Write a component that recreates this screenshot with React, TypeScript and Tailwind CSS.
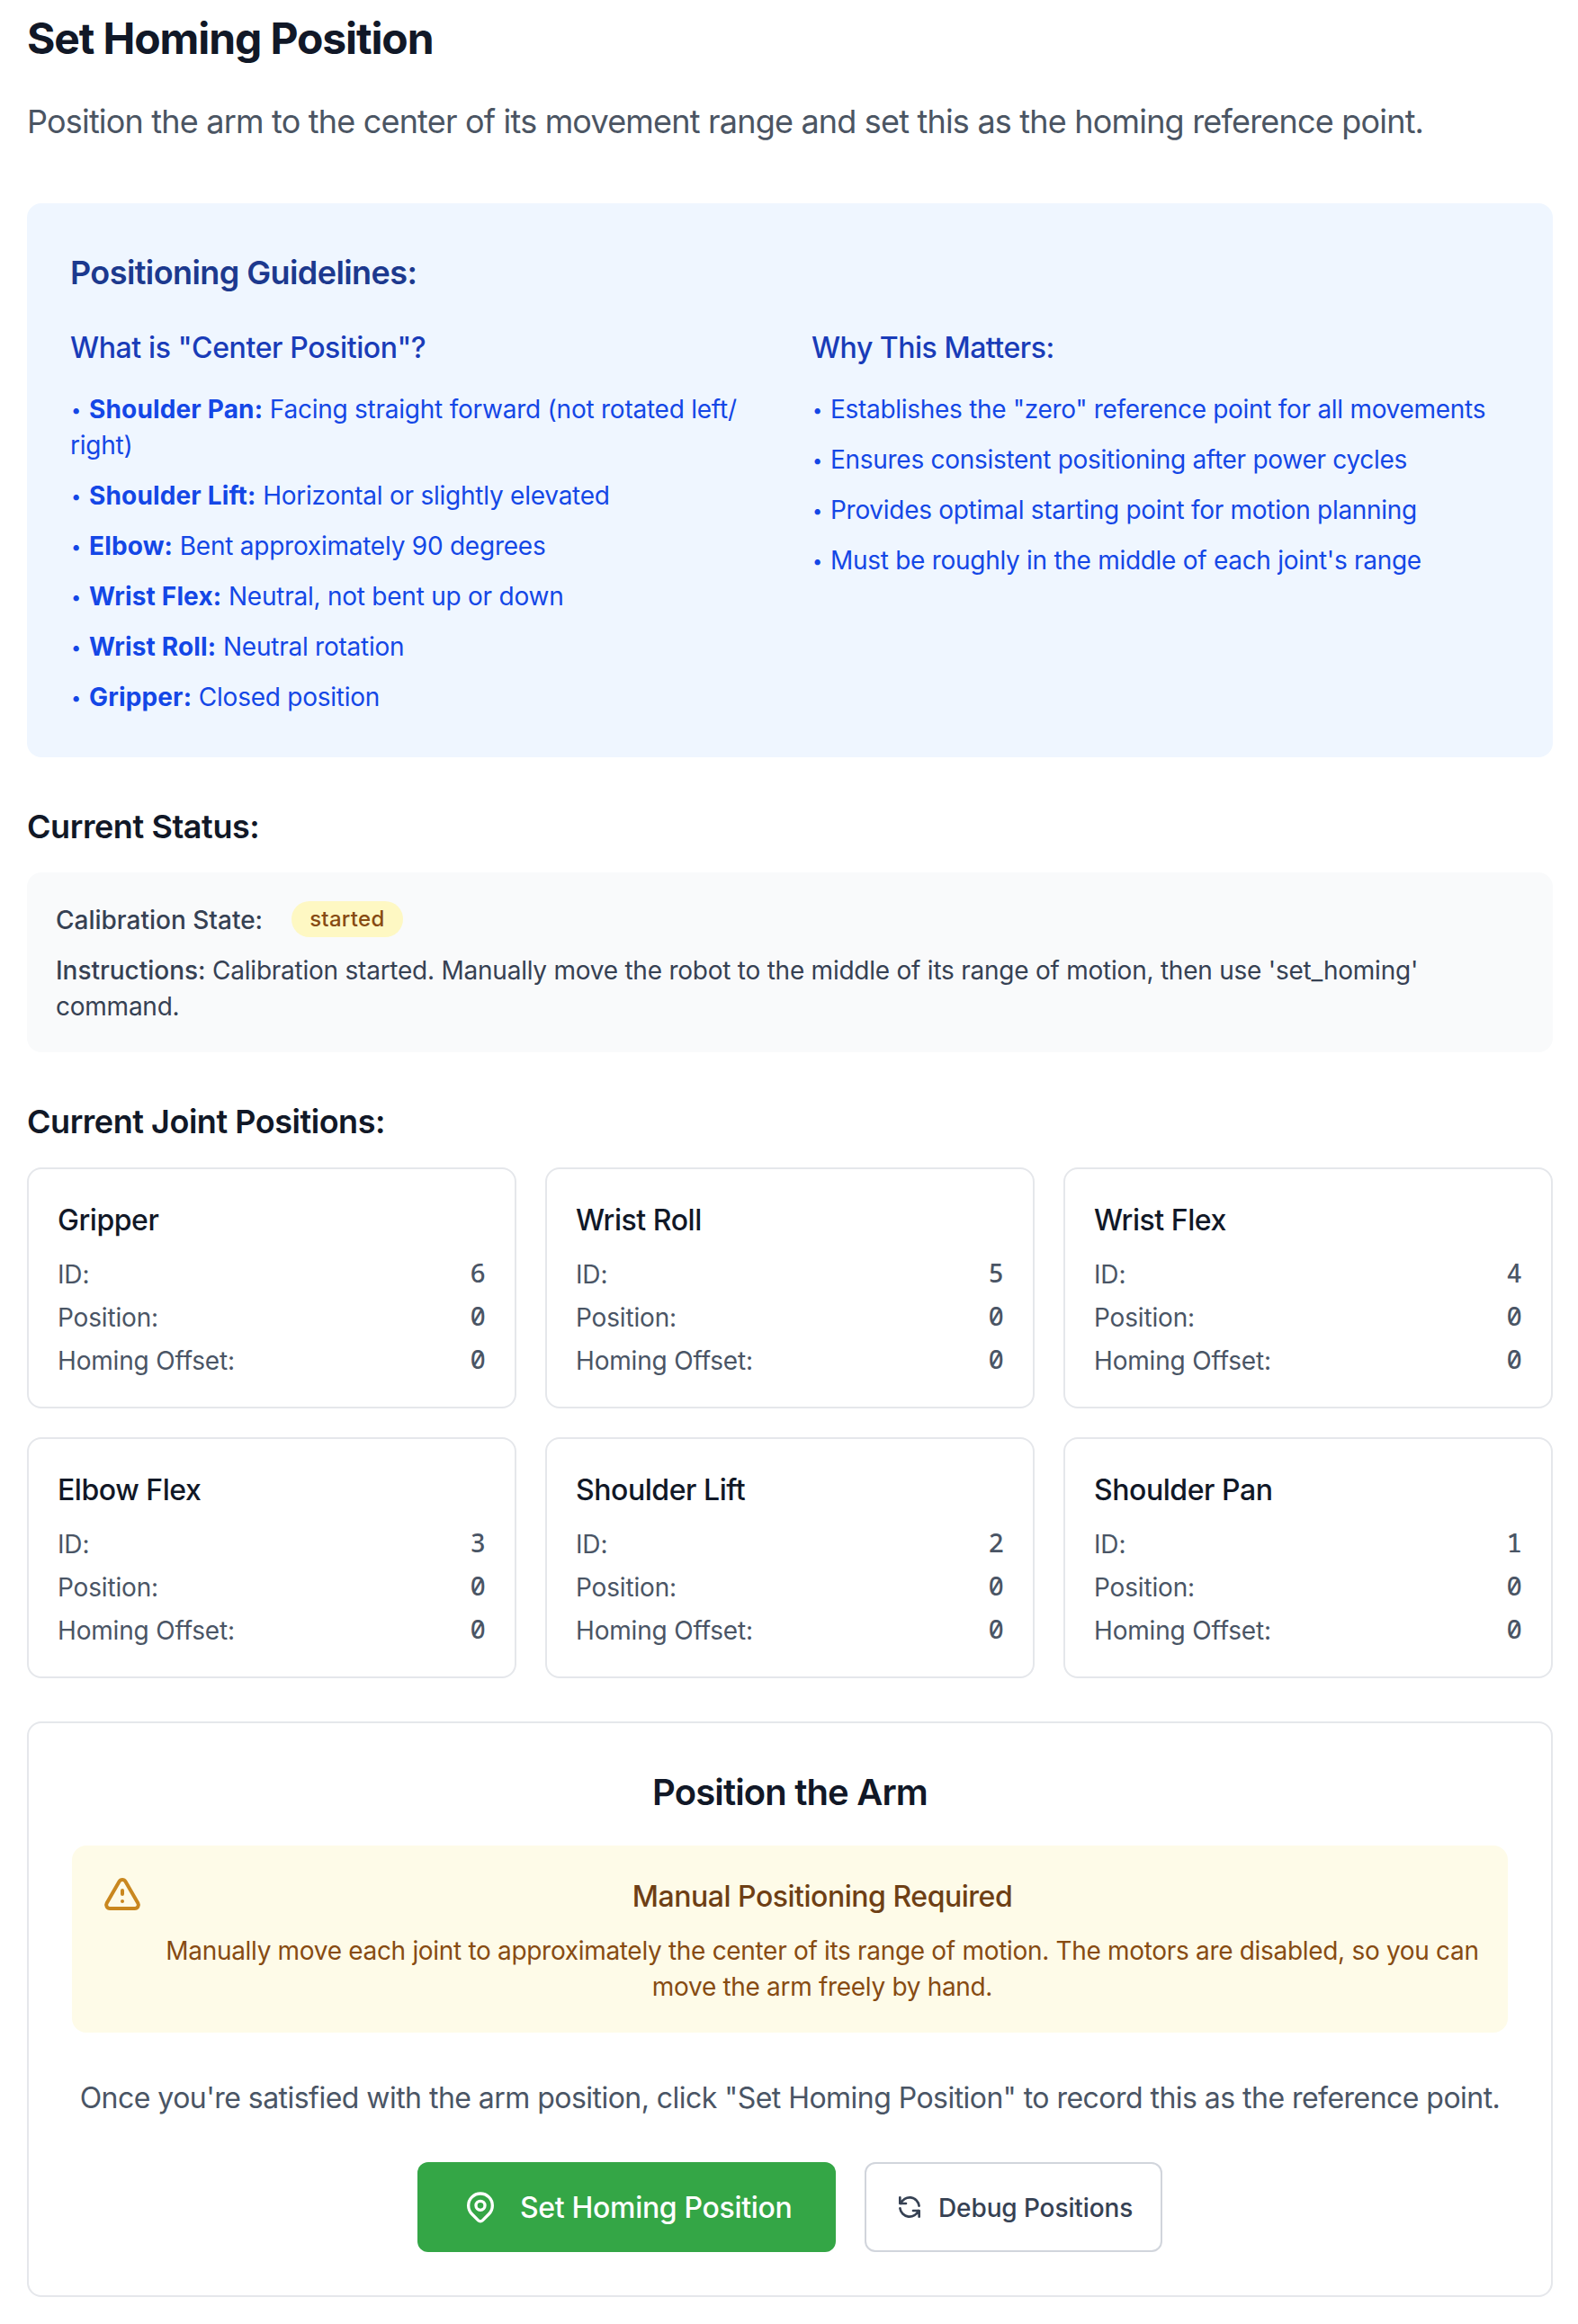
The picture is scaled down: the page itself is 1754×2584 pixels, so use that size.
import type { ReactNode } from 'react';

const poses: [string, string][] = [
  ['Shoulder Pan:', 'Facing straight forward (not rotated left/ right)'],
  ['Shoulder Lift:', 'Horizontal or slightly elevated'],
  ['Elbow:', 'Bent approximately 90 degrees'],
  ['Wrist Flex:', 'Neutral, not bent up or down'],
  ['Wrist Roll:', 'Neutral rotation'],
  ['Gripper:', 'Closed position'],
];

const reasons = [
  'Establishes the "zero" reference point for all movements',
  'Ensures consistent positioning after power cycles',
  'Provides optimal starting point for motion planning',
  "Must be roughly in the middle of each joint's range",
];

const joints = [
  { name: 'Gripper', id: 6, position: 0, offset: 0 },
  { name: 'Wrist Roll', id: 5, position: 0, offset: 0 },
  { name: 'Wrist Flex', id: 4, position: 0, offset: 0 },
  { name: 'Elbow Flex', id: 3, position: 0, offset: 0 },
  { name: 'Shoulder Lift', id: 2, position: 0, offset: 0 },
  { name: 'Shoulder Pan', id: 1, position: 0, offset: 0 },
];

function Icon({ className, children }: { className: string; children: ReactNode }) {
  return (
    <svg
      className={className}
      viewBox="0 0 24 24"
      fill="none"
      stroke="currentColor"
      strokeWidth={2}
      strokeLinecap="round"
      strokeLinejoin="round"
    >
      {children}
    </svg>
  );
}

function Bullet() {
  return <span className="inline-block w-[21px] pl-px align-[2px] text-[20px] leading-none">•</span>;
}

function Row({ label, value }: { label: string; value: number }) {
  return (
    <div className="flex h-10 items-start justify-between">
      <span className="tracking-[-0.006em]">{label}</span>
      <span className="font-['Noto_Sans_Mono',monospace] text-[29px] leading-[36px] font-medium">{value}</span>
    </div>
  );
}

export default function App() {
  return (
    <div className="min-h-[2584px] bg-white pt-[11px] pr-[28px] pl-[30px] font-['Inter',sans-serif] text-[#111827]">
      <h2 className="text-[48px] leading-[64px] font-bold tracking-[-0.0232em]">Set Homing Position</h2>
      <p className="mt-8 text-[36px] leading-[56px] tracking-[-0.0224em] whitespace-nowrap text-[#4b5563]">
        Position the arm to the center of its movement range and set this as the homing reference point.
      </p>

      <section className="mt-[63px] rounded-2xl bg-[#eff6ff] px-12 pt-[49px] pb-[47px]">
        <h3 className="text-[36px] leading-[56px] font-semibold tracking-[-0.0163em] text-[#1c398e]">
          Positioning Guidelines:
        </h3>
        <div className="mt-8 grid grid-cols-2 gap-12">
          <div>
            <h4 className="text-[32px] leading-[48px] font-medium tracking-[-0.012em] text-[#193cb8]">
              What is "Center Position"?
            </h4>
            <ul className="mt-6 space-y-4 text-[28px] leading-[40px] tracking-[-0.0085em] text-[#1447e6]">
              {poses.map(([name, text]) => (
                <li key={name}>
                  <Bullet />
                  <strong className="font-bold tracking-[0.0055em]">{name}</strong> {text.split('/ ')[0]}
                  {text.includes('/ ') && (
                    <>
                      /<br />
                      {text.split('/ ')[1]}
                    </>
                  )}
                </li>
              ))}
            </ul>
          </div>
          <div>
            <h4 className="text-[32px] leading-[48px] font-medium tracking-[-0.015em] text-[#193cb8]">
              Why This Matters:
            </h4>
            <ul className="mt-6 space-y-4 text-[28px] leading-[40px] tracking-[-0.0103em] text-[#1447e6]">
              {reasons.map((reason) => (
                <li key={reason}>
                  <Bullet />
                  {reason}
                </li>
              ))}
            </ul>
          </div>
        </div>
      </section>

      <h3 className="mt-[49px] text-[36px] leading-[56px] font-semibold tracking-[-0.0118em]">Current Status:</h3>
      <section className="mt-[23px] rounded-2xl bg-[#f9fafb] px-8 pt-8 pb-[31px] text-[28px] leading-[40px] text-[#364153]">
        <div className="flex items-center gap-8">
          <span className="pt-px font-medium -mb-px">Calibration State:</span>
          <span className="rounded-full bg-[#fef8c3] px-5 text-[24px] font-medium tracking-[0.012em] text-[#874b12]">
            started
          </span>
        </div>
        <p className="mt-[17px] tracking-[-0.0085em] whitespace-nowrap">
          <span className="font-medium tracking-[-0.001em]">Instructions:</span> Calibration started. Manually move the
          robot to the middle of its range of motion, then use 'set_homing'
          <br />
          command.
        </p>
      </section>

      <h3 className="mt-[49px] text-[36px] leading-[56px] font-semibold tracking-[-0.013em]">
        Current Joint Positions:
      </h3>
      <section className="mt-[23px] grid grid-cols-3 gap-8">
        {joints.map((joint) => (
          <article key={joint.id} className="rounded-2xl border-2 border-[#e5e7eb] px-8 pt-[33px] pb-[31px]">
            <h4 className="text-[32px] leading-[48px] font-medium tracking-[-0.014em]">{joint.name}</h4>
            <div className="mt-4 space-y-2 text-[28px] leading-[40px] text-[#4a5565]">
              <Row label="ID:" value={joint.id} />
              <Row label="Position:" value={joint.position} />
              <Row label="Homing Offset:" value={joint.offset} />
            </div>
          </article>
        ))}
      </section>

      <section className="mt-12 rounded-2xl border-2 border-[#e5e7eb] px-12 pt-[49px] pb-12 text-center">
        <h3 className="text-[40px] leading-[56px] font-semibold tracking-[-0.0213em]">Position the Arm</h3>
        <div className="mt-[31px] flex items-start gap-6 rounded-2xl bg-[#fefbe8] p-8">
          <Icon className="size-12 shrink-0 text-[#c9871f]">
            <path d="M12 9v2m0 4h.01m-6.938 4h13.856c1.54 0 2.502-1.667 1.732-3L13.732 4c-.77-1.333-2.694-1.333-3.464 0L3.34 16c-.77 1.333.192 3 1.732 3z" />
          </Icon>
          <div className="-mb-px flex-1 pt-px">
            <h4 className="text-[32px] leading-[48px] font-medium tracking-[-0.0149em] text-[#6e3f14]">
              Manual Positioning Required
            </h4>
            <p className="mt-4 text-[28px] leading-[40px] tracking-[-0.0112em] whitespace-nowrap text-[#874b12]">
              Manually move each joint to approximately the center of its range of motion. The motors are disabled, so
              you can
              <br />
              move the arm freely by hand.
            </p>
          </div>
        </div>
        <p className="mt-[49px] text-[32px] leading-[48px] tracking-[-0.0167em] whitespace-nowrap text-[#4a5565]">
          Once you're satisfied with the arm position, click "Set Homing Position" to record this as the reference
          point.
        </p>
        <div className="mt-[47px] flex justify-center gap-8">
          <button className="flex h-[100px] w-[465px] items-center gap-6 rounded-xl bg-[#34a646] pl-[50px] text-[32px] leading-[48px] font-medium tracking-[-0.0103em] whitespace-nowrap text-white">
            <Icon className="size-10 shrink-0">
              <path d="M17.657 16.657L13.414 20.9a1.998 1.998 0 01-2.827 0l-4.244-4.243a8 8 0 1111.314 0z" />
              <path d="M15 11a3 3 0 11-6 0 3 3 0 016 0z" />
            </Icon>
            <span className="pt-[2px]">Set Homing Position</span>
          </button>
          <button className="flex h-[100px] w-[331px] items-center gap-4 rounded-xl border-2 border-[#d1d5dc] bg-white pl-8 text-[28px] leading-[40px] font-medium tracking-[-0.004em] whitespace-nowrap text-[#364153]">
            <Icon className="size-8 shrink-0">
              <path d="M4 4v5h.582m15.356 2A8.001 8.001 0 004.582 9m0 0H9m11 11v-5h-.581m0 0a8.003 8.003 0 01-15.357-2m15.357 2H15" />
            </Icon>
            <span className="pt-[2px]">Debug Positions</span>
          </button>
        </div>
      </section>
    </div>
  );
}
